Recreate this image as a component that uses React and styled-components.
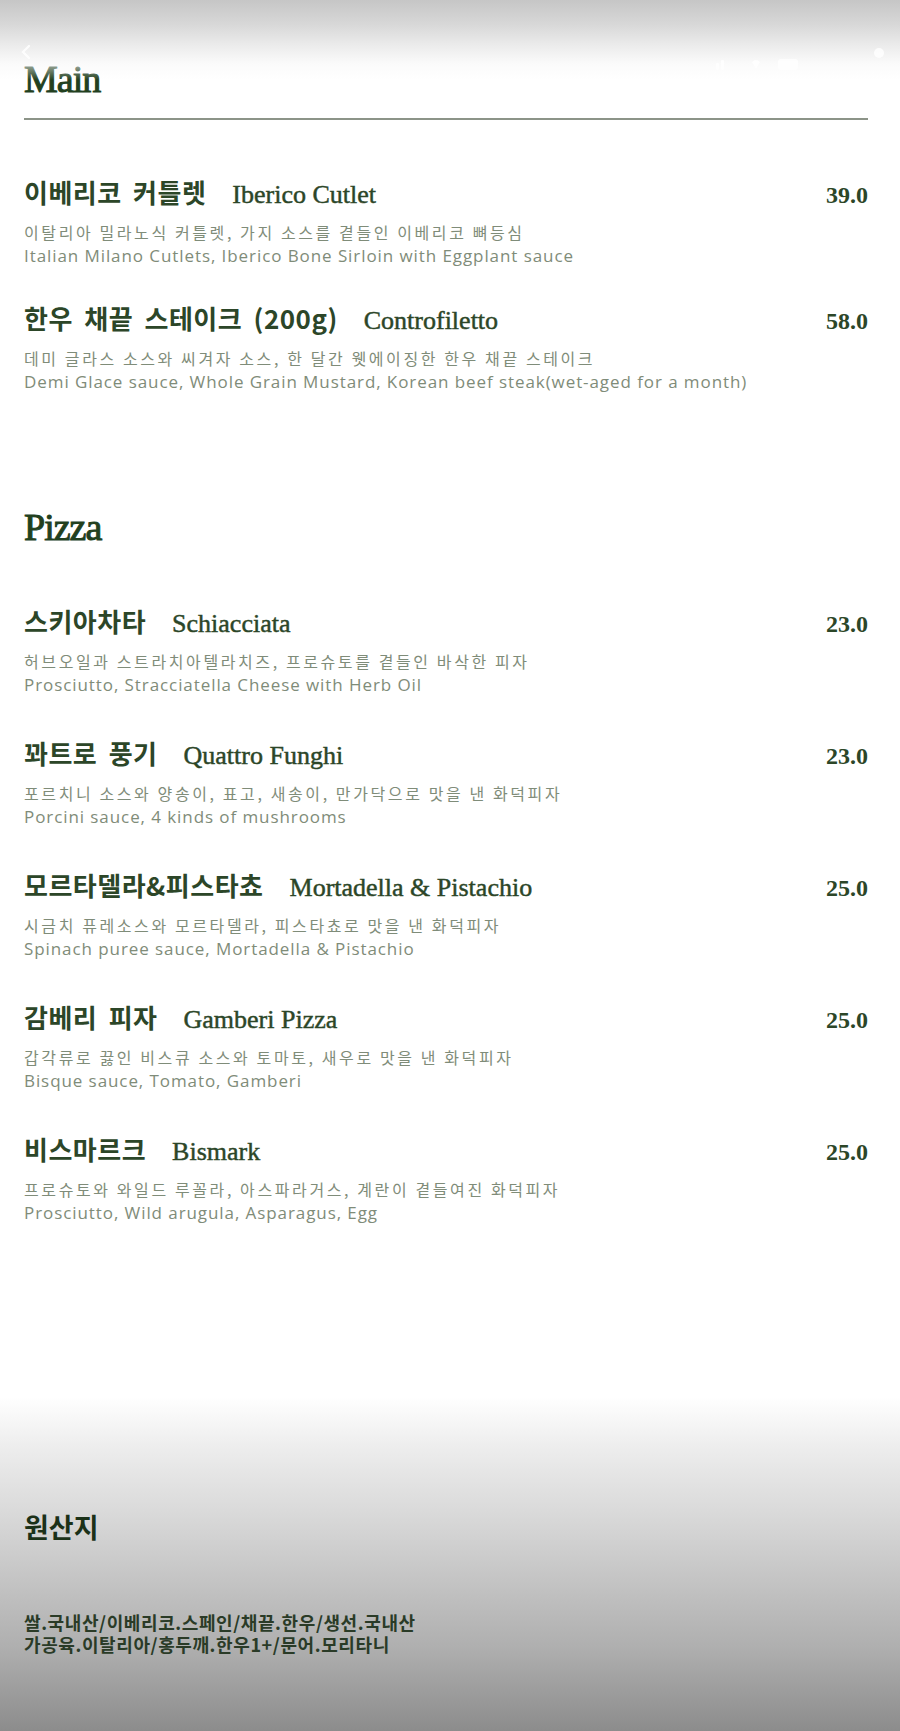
import React from 'react';
import styled, { createGlobalStyle } from 'styled-components';

const GREEN = '#2c4628';
const DESC = '#7f8c79';

const mainItems = [
    {
        ko: '이베리코 커틀렛',
        en: 'Iberico Cutlet',
        price: '39.0',
        koDesc: '이탈리아 밀라노식 커틀렛, 가지 소스를 곁들인 이베리코 뼈등심',
        enDesc: 'Italian Milano Cutlets, Iberico Bone Sirloin with Eggplant sauce',
    }, {
        ko: '한우 채끝 스테이크 (200g)',
        en: 'Controfiletto',
        price: '58.0',
        koDesc: '데미 글라스 소스와 씨겨자 소스, 한 달간 웻에이징한 한우 채끝 스테이크',
        enDesc: 'Demi Glace sauce, Whole Grain Mustard, Korean beef steak(wet-aged for a month)',
    },
];

const pizzaItems = [
    {
        ko: '스키아차타',
        en: 'Schiacciata',
        price: '23.0',
        koDesc: '허브오일과 스트라치아텔라치즈, 프로슈토를 곁들인 바삭한 피자',
        enDesc: 'Prosciutto, Stracciatella Cheese with Herb Oil',
    }, {
        ko: '꽈트로 풍기',
        en: 'Quattro Funghi',
        price: '23.0',
        koDesc: '포르치니 소스와 양송이, 표고, 새송이, 만가닥으로 맛을 낸 화덕피자',
        enDesc: 'Porcini sauce, 4 kinds of mushrooms',
    }, {
        ko: '모르타델라&피스타쵸',
        en: 'Mortadella & Pistachio',
        price: '25.0',
        koDesc: '시금치 퓨레소스와 모르타델라, 피스타쵸로 맛을 낸 화덕피자',
        enDesc: 'Spinach puree sauce, Mortadella & Pistachio',
    }, {
        ko: '감베리 피자',
        en: 'Gamberi Pizza',
        price: '25.0',
        koDesc: '갑각류로 끓인 비스큐 소스와 토마토, 새우로 맛을 낸 화덕피자',
        enDesc: 'Bisque sauce, Tomato, Gamberi',
    }, {
        ko: '비스마르크',
        en: 'Bismark',
        price: '25.0',
        koDesc: '프로슈토와 와일드 루꼴라, 아스파라거스, 계란이 곁들여진 화덕피자',
        enDesc: 'Prosciutto, Wild arugula, Asparagus, Egg',
    },
];

const origin = '쌀.국내산/이베리코.스페인/채끝.한우/생선.국내산\n가공육.이탈리아/홍두깨.한우1+/문어.모리타니';

const GlobalStyle = createGlobalStyle`
    html, body {
        margin: 0;
        padding: 0;
        background: #ffffff;
    }
    body {
        font-family: "Noto Sans CJK KR", "Noto Sans", sans-serif;
    }
`;

const Page = styled.div`
    position: relative;
    width: 900px;
    min-height: 1731px;
    background: #ffffff;
    overflow: hidden;
`;

// phone status bar shade laid over the top of the page
const TopShade = styled.div`
    position: absolute;
    top: 0;
    left: 0;
    right: 0;
    height: 80px;
    pointer-events: none;
    background: linear-gradient(
        180deg,
        rgba(198, 198, 198, 1) 0%,
        rgba(214, 214, 214, 0.97) 30%,
        rgba(232, 232, 232, 0.9) 55%,
        rgba(248, 248, 248, 0.6) 80%,
        rgba(255, 255, 255, 0) 100%
    );
`;

const StatusIcon = styled.svg`
    position: absolute;
    top: ${(p) => p.$top}px;
    left: ${(p) => p.$left}px;
    opacity: 0.85;
`;

const Content = styled.main`
    padding: 56px 32px 0 24px;
`;

const SectionHeading = styled.h2`
    margin: ${(p) => p.$mt}px 0 0;
    font-family: "Liberation Serif", serif;
    font-weight: 400;
    font-size: 38px;
    line-height: 46px;
    letter-spacing: -1px;
    color: #22401e;
    -webkit-text-stroke: 1px #22401e;
`;

const Rule = styled.hr`
    margin: 16px 0 0;
    border: 0;
    height: 2px;
    background: #8c9488;
`;

const ItemList = styled.div`
    display: flex;
    flex-direction: column;
    gap: ${(p) => p.$gap}px;
    margin-top: ${(p) => p.$mt}px;
`;

const Item = styled.article`
    display: flex;
    flex-direction: column;
`;

const TitleRow = styled.div`
    display: flex;
    align-items: baseline;
    gap: 26px;
    height: 32px;
    line-height: 32px;
    color: ${GREEN};
`;

const KoTitle = styled.span`
    font-family: "Noto Sans CJK KR", sans-serif;
    font-weight: 700;
    font-size: 26px;
    letter-spacing: 0.5px;
    word-spacing: 5px;
`;

const EnTitle = styled.span`
    font-family: "Liberation Serif", serif;
    font-size: 26px;
    -webkit-text-stroke: 0.45px ${GREEN};
`;

const Price = styled.span`
    margin-left: auto;
    font-family: "Liberation Serif", serif;
    font-weight: 700;
    font-size: 24px;
`;

const KoDesc = styled.p`
    margin: 13px 0 0;
    font-family: "Noto Sans CJK KR", sans-serif;
    font-size: 16px;
    line-height: 22px;
    letter-spacing: 2.6px;
    color: ${DESC};
`;

const EnDesc = styled.p`
    margin: 0;
    font-family: "Open Sans", sans-serif;
    font-size: 17px;
    line-height: 25px;
    letter-spacing: 0.92px;
    color: ${DESC};
`;

const Footer = styled.footer`
    margin-top: 172px;
    height: 334px;
    box-sizing: border-box;
    padding: 113px 24px 0;
    background: linear-gradient(
        180deg,
        #ffffff 0%,
        #eeeeee 14%,
        #d9d9d9 35%,
        #c4c4c4 55%,
        #afafaf 75%,
        #9a9a9a 90%,
        #8c8c8c 100%
    );
`;

const FooterTitle = styled.h3`
    margin: 0 0 67px;
    font-family: "Noto Sans CJK KR", sans-serif;
    font-weight: 700;
    font-size: 27px;
    line-height: 34px;
    color: #1b3118;
`;

const FooterNote = styled.p`
    margin: 0;
    white-space: pre-line;
    font-family: "Noto Sans CJK KR", sans-serif;
    font-weight: 700;
    font-size: 18px;
    line-height: 22px;
    letter-spacing: 0.6px;
    color: #2a3b27;
`;

function MenuItem({ item }) {
    return (
        <Item>
            <TitleRow>
                <KoTitle>{item.ko}</KoTitle>
                <EnTitle>{item.en}</EnTitle>
                <Price>{item.price}</Price>
            </TitleRow>
            <KoDesc>{item.koDesc}</KoDesc>
            <EnDesc>{item.enDesc}</EnDesc>
        </Item>
    );
}

export default function App() {
    return (
        <Page>
            <GlobalStyle />
            <Content>
                <SectionHeading $mt={0}>Main</SectionHeading>
                <Rule />
                <ItemList $gap={34} $mt={56}>
                    {mainItems.map((item) => <MenuItem key={item.en} item={item} />)}
                </ItemList>

                <SectionHeading $mt={110}>Pizza</SectionHeading>
                <ItemList $gap={40} $mt={55}>
                    {pizzaItems.map((item) => <MenuItem key={item.en} item={item} />)}
                </ItemList>
            </Content>

            <Footer>
                <FooterTitle>원산지</FooterTitle>
                <FooterNote>{origin}</FooterNote>
            </Footer>

            <TopShade>
                <StatusIcon $top={44} $left={20} width="12" height="16" viewBox="0 0 12 16">
                    <path d="M9 2 L3 8 L9 14" fill="none" stroke="#fff" strokeWidth="2.4" strokeLinecap="round" />
                </StatusIcon>
                <StatusIcon $top={56} $left={716} width="90" height="16" viewBox="0 0 90 16">
                    <rect x="0" y="7" width="3" height="7" rx="1" fill="#fff" />
                    <rect x="5" y="4" width="3" height="10" rx="1" fill="#fff" />
                    <path d="M40 13 L36 6 Q40 2 44 6 Z" fill="#fff" />
                    <rect x="62" y="3" width="20" height="11" rx="3" fill="#fff" />
                </StatusIcon>
                <StatusIcon $top={47} $left={873} width="12" height="12" viewBox="0 0 12 12">
                    <circle cx="6" cy="6" r="5" fill="#fff" />
                </StatusIcon>
            </TopShade>
        </Page>
    );
}
